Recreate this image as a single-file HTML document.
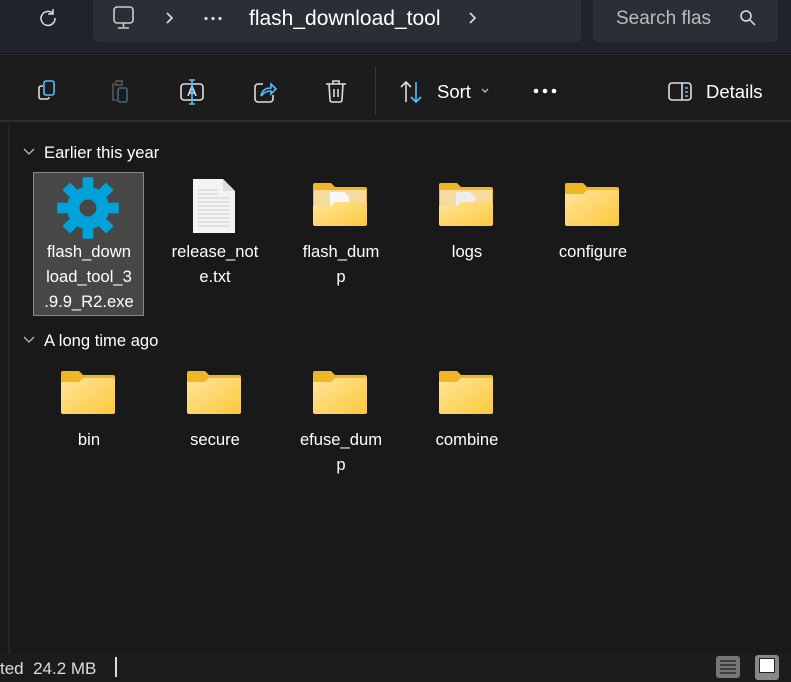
<!DOCTYPE html>
<html><head><meta charset="utf-8"><style>
*{margin:0;padding:0;box-sizing:border-box}
body{width:791px;height:682px;background:#191919;font-family:"Liberation Sans",sans-serif;color:#fff;position:relative;overflow:hidden}
.abs{position:absolute}
.hdr{left:0;top:0;width:791px;height:53px;background:#1f242a}
.addr{left:93px;top:0;width:488px;height:42px;background:#2a2f35;border-radius:0 0 6px 6px}
.srch{left:593px;top:0;width:185px;height:42px;background:#2a2f35;border-radius:0 0 6px 6px}
.tb{left:0;top:54px;width:791px;height:68px;background:#1c1c1c;border-top:1px solid #2e2e2e;border-bottom:2px solid #2e2e2e}
.txt{font-size:19px;white-space:nowrap}
.lbl{position:absolute;width:120px;text-align:center;font-size:16.6px;line-height:25px;color:#fff}
.grp{font-size:16.6px;color:#fff}
</style></head><body>
<div class="abs hdr"></div>
<div class="abs addr"></div>
<div class="abs srch"></div>
<svg class="abs" style="left:36px;top:6px" width="24" height="24" viewBox="0 0 24 24" fill="none" stroke="#ddd" stroke-width="1.5"><path d="M17 7.5A7 7 0 1 0 19 12"/><path d="M17 3v5h-5"/></svg>
<svg class="abs" style="left:110px;top:5px" width="28" height="26" viewBox="0 0 28 26" fill="none" stroke="#ccc" stroke-width="1.6"><rect x="4" y="2" width="19" height="16" rx="3"/><path d="M13.5 18v4M8 23h11"/></svg>
<svg class="abs" style="left:164px;top:11px" width="10" height="14" viewBox="0 0 10 14" fill="none" stroke="#ddd" stroke-width="1.6"><path d="M3 2l5 5-5 5"/></svg>
<svg class="abs" style="left:203px;top:16px" width="20" height="5" viewBox="0 0 20 5" fill="#ddd"><circle cx="3" cy="2.5" r="1.6"/><circle cx="10" cy="2.5" r="1.6"/><circle cx="17" cy="2.5" r="1.6"/></svg>
<div class="abs txt" style="left:249px;top:7px;color:#fff;font-size:21px">flash_download_tool</div>
<svg class="abs" style="left:467px;top:11px" width="10" height="14" viewBox="0 0 10 14" fill="none" stroke="#ddd" stroke-width="1.6"><path d="M3 2l5 5-5 5"/></svg>
<div class="abs txt" style="left:616px;top:8px;color:#bbb;width:96px;overflow:hidden">Search flash</div>
<svg class="abs" style="left:738px;top:8px" width="20" height="20" viewBox="0 0 20 20" fill="none" stroke="#ddd" stroke-width="1.5"><circle cx="8" cy="8" r="5"/><path d="M12 12l5 5"/></svg>
<div class="abs tb"></div>
<svg class="abs" style="left:34px;top:78px" width="28" height="28" viewBox="0 0 28 28" fill="none" stroke-width="1.6"><rect x="10" y="3" width="10" height="14" rx="2" stroke="#4cc2ff"/><path d="M9 8H7a2 2 0 0 0-2 2v9a2 2 0 0 0 2 2h6a2 2 0 0 0 2-2" stroke="#ddd"/></svg>
<svg class="abs" style="left:106px;top:78px" width="28" height="28" viewBox="0 0 28 28" fill="none" stroke-width="1.6"><path d="M9 6H7v16h4" stroke="#555"/><rect x="10" y="3" width="6" height="4" stroke="#555"/><rect x="12" y="10" width="9" height="14" rx="2" stroke="#3a6a80"/></svg>
<svg class="abs" style="left:178px;top:78px" width="28" height="28" viewBox="0 0 28 28" fill="none" stroke-width="1.6"><rect x="3" y="6" width="22" height="16" rx="3" stroke="#ddd"/><path d="M10 18l4-10 4 10M11.5 15h5" stroke="#ddd"/><path d="M14 2v24M11 2h6M11 26h6" stroke="#4cc2ff"/></svg>
<svg class="abs" style="left:251px;top:78px" width="28" height="28" viewBox="0 0 28 28" fill="none" stroke-width="1.6"><path d="M12 6H7a3 3 0 0 0-3 3v12a3 3 0 0 0 3 3h12a3 3 0 0 0 3-3v-4" stroke="#ddd"/><path d="M10 18c1-6 5-8 10-8V6l5 5-5 5v-3c-4 0-7 1-10 5z" stroke="#4cc2ff" fill="none"/></svg>
<svg class="abs" style="left:322px;top:77px" width="28" height="28" viewBox="0 0 28 28" fill="none" stroke="#ddd" stroke-width="1.6"><path d="M4 7h20M11 7V4h6v3M7 7l1 16a2 2 0 0 0 2 2h8a2 2 0 0 0 2-2l1-16M12 12v8M16 12v8"/></svg>
<div class="abs" style="left:375px;top:67px;width:1px;height:48px;background:#3a3a3a"></div>
<svg class="abs" style="left:397px;top:78px" width="28" height="28" viewBox="0 0 28 28" fill="none" stroke-width="1.6"><path d="M9 24V4M4 9l5-5 5 5" stroke="#ddd"/><path d="M19 4v20M14 19l5 5 5-5" stroke="#4cc2ff"/></svg>
<div class="abs txt" style="left:437px;top:81px;font-size:18.5px">Sort</div>
<svg class="abs" style="left:480px;top:87px" width="10" height="8" viewBox="0 0 10 8" fill="none" stroke="#ccc" stroke-width="1.2"><path d="M2 2l3 3 3-3"/></svg>
<svg class="abs" style="left:532px;top:88px" width="26" height="6" viewBox="0 0 26 6" fill="#fff"><circle cx="4" cy="3" r="2.3"/><circle cx="13" cy="3" r="2.3"/><circle cx="22" cy="3" r="2.3"/></svg>
<svg class="abs" style="left:666px;top:78px" width="28" height="28" viewBox="0 0 28 28" fill="none" stroke-width="1.6"><rect x="3" y="5" width="22" height="17" rx="3" stroke="#ddd"/><path d="M16 5v17" stroke="#ddd"/><path d="M19 10h3M19 14h3M19 18h3" stroke="#4cc2ff"/></svg>
<div class="abs txt" style="left:706px;top:81px;font-size:18.5px">Details</div>
<div class="abs" style="left:8px;top:124px;width:2px;height:530px;background:#242424"></div>
<svg class="abs" style="left:22px;top:146px" width="14" height="12" viewBox="0 0 14 12" fill="none" stroke="#bbb" stroke-width="1.3"><path d="M2 3l5 5 5-5"/></svg>
<div class="abs grp" style="left:44px;top:143px">Earlier this year</div>
<svg class="abs" style="left:22px;top:334px" width="14" height="12" viewBox="0 0 14 12" fill="none" stroke="#bbb" stroke-width="1.3"><path d="M2 3l5 5 5-5"/></svg>
<div class="abs grp" style="left:44px;top:331px">A long time ago</div>
<div class="abs" style="left:33px;top:172px;width:111px;height:144px;background:#474747;border:1px solid #888"></div>
<svg class="abs" style="left:54px;top:174px" width="68" height="68" viewBox="0 0 64 64"><g fill="#00a2d9"><circle cx="32" cy="32" r="20"/><rect x="27" y="3" width="10" height="12"/><rect x="27" y="49" width="10" height="12"/><rect x="3" y="27" width="12" height="10"/><rect x="49" y="27" width="12" height="10"/><g transform="rotate(45 32 32)"><rect x="27" y="3" width="10" height="12"/><rect x="27" y="49" width="10" height="12"/><rect x="3" y="27" width="12" height="10"/><rect x="49" y="27" width="12" height="10"/></g></g><circle cx="32" cy="32" r="8" fill="#474747"/></svg>
<div class="lbl" style="left:29px;top:239px">flash_down<br>load_tool_3<br>.9.9_R2.exe</div>
<svg class="abs" style="left:191px;top:178px" width="46" height="56" viewBox="0 0 46 56"><path d="M2 1h30l12 12v42H2z" fill="#f4f4f4"/><path d="M32 1v12h12" fill="#ddd"/><g stroke="#ccc" stroke-width="1"><path d="M7 12h20M7 16h20M7 20h32M7 24h32M7 28h32M7 32h32M7 36h32M7 40h32M7 44h32M7 48h32"/></g></svg>
<div class="lbl" style="left:155px;top:239px">release_not<br>e.txt</div>
<svg width="0" height="0" style="position:absolute"><defs>
<linearGradient id="g" x1="0" y1="0" x2="1" y2="1"><stop offset="0" stop-color="#ffe69a"/><stop offset="1" stop-color="#fcc83c"/></linearGradient>
</defs></svg>
<svg class="abs" style="left:312px;top:182px" width="56" height="46" viewBox="0 0 56 46"><path d="M1 3a2 2 0 0 1 2-2h16l4 4h30a2 2 0 0 1 2 2v36H1z" fill="#f0b626"/><rect x="2" y="8" width="52" height="30" fill="#f5dba0"/><path d="M18 10h14l5 5v15H18z" fill="#f7f7f7"/><path d="M1 24h18l4-4h30a2 2 0 0 1 2 2v20a2 2 0 0 1-2 2H3a2 2 0 0 1-2-2z" fill="url(#g)"/></svg>
<svg class="abs" style="left:438px;top:182px" width="56" height="46" viewBox="0 0 56 46"><path d="M1 3a2 2 0 0 1 2-2h16l4 4h30a2 2 0 0 1 2 2v36H1z" fill="#f0b626"/><rect x="2" y="8" width="52" height="30" fill="#f5dba0"/><path d="M18 10h14l5 5v15H18z" fill="#eeeeee"/><path d="M1 24h18l4-4h30a2 2 0 0 1 2 2v20a2 2 0 0 1-2 2H3a2 2 0 0 1-2-2z" fill="url(#g)"/></svg>
<svg class="abs" style="left:564px;top:182px" width="56" height="46" viewBox="0 0 56 46"><path d="M1 3a2 2 0 0 1 2-2h16l4 4h30a2 2 0 0 1 2 2v36H1z" fill="#f0b626"/><path d="M1 12h18l4-4h30a2 2 0 0 1 2 2v32a2 2 0 0 1-2 2H3a2 2 0 0 1-2-2z" fill="url(#g)"/></svg>
<svg class="abs" style="left:60px;top:370px" width="56" height="46" viewBox="0 0 56 46"><path d="M1 3a2 2 0 0 1 2-2h16l4 4h30a2 2 0 0 1 2 2v36H1z" fill="#f0b626"/><path d="M1 12h18l4-4h30a2 2 0 0 1 2 2v32a2 2 0 0 1-2 2H3a2 2 0 0 1-2-2z" fill="url(#g)"/></svg>
<svg class="abs" style="left:186px;top:370px" width="56" height="46" viewBox="0 0 56 46"><path d="M1 3a2 2 0 0 1 2-2h16l4 4h30a2 2 0 0 1 2 2v36H1z" fill="#f0b626"/><path d="M1 12h18l4-4h30a2 2 0 0 1 2 2v32a2 2 0 0 1-2 2H3a2 2 0 0 1-2-2z" fill="url(#g)"/></svg>
<svg class="abs" style="left:312px;top:370px" width="56" height="46" viewBox="0 0 56 46"><path d="M1 3a2 2 0 0 1 2-2h16l4 4h30a2 2 0 0 1 2 2v36H1z" fill="#f0b626"/><path d="M1 12h18l4-4h30a2 2 0 0 1 2 2v32a2 2 0 0 1-2 2H3a2 2 0 0 1-2-2z" fill="url(#g)"/></svg>
<svg class="abs" style="left:438px;top:370px" width="56" height="46" viewBox="0 0 56 46"><path d="M1 3a2 2 0 0 1 2-2h16l4 4h30a2 2 0 0 1 2 2v36H1z" fill="#f0b626"/><path d="M1 12h18l4-4h30a2 2 0 0 1 2 2v32a2 2 0 0 1-2 2H3a2 2 0 0 1-2-2z" fill="url(#g)"/></svg>
<div class="lbl" style="left:281px;top:239px">flash_dum<br>p</div>
<div class="lbl" style="left:407px;top:239px">logs</div>
<div class="lbl" style="left:533px;top:239px">configure</div>
<div class="lbl" style="left:29px;top:427px">bin</div>
<div class="lbl" style="left:155px;top:427px">secure</div>
<div class="lbl" style="left:281px;top:427px">efuse_dum<br>p</div>
<div class="lbl" style="left:407px;top:427px">combine</div>
<div class="abs" style="left:0;top:654px;width:791px;height:28px;background:#1c1c1c"></div>
<div class="abs" style="left:0;top:659px;font-size:17px;color:#ddd;white-space:nowrap">ted&nbsp; 24.2 MB</div>
<div class="abs" style="left:115px;top:657px;width:2px;height:20px;background:#ddd"></div>
<div class="abs" style="left:716px;top:656px;width:24px;height:22px;background:#777;border-radius:3px"></div>
<svg class="abs" style="left:716px;top:656px" width="24" height="22" viewBox="0 0 24 22" stroke="#1c1c1c" stroke-width="1.3"><path d="M4 5h16M4 9h16M4 13h16M4 17h16"/></svg>
<div class="abs" style="left:755px;top:655px;width:24px;height:25px;background:#888;border-radius:3px"></div>
<div class="abs" style="left:759px;top:658px;width:16px;height:15px;background:#fff;border:1px solid #222"></div>
</body></html>
